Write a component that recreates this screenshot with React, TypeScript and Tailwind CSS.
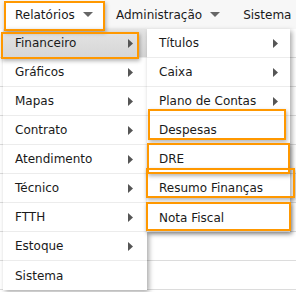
import React from "react";

const font = { fontFamily: '"DejaVu Sans", Verdana, sans-serif' };

function RightArrow() {
  return (
    <svg width="5" height="9" viewBox="0 0 5 9" className="shrink-0">
      <path d="M0 0 L5 4.5 L0 9 Z" fill="#555" />
    </svg>
  );
}

function DownCaret() {
  return (
    <svg width="10" height="5" viewBox="0 0 10 5" className="shrink-0">
      <path d="M0 0 L10 0 L5 5 Z" fill="#666" />
    </svg>
  );
}

const mainItems: { label: string; sub: boolean; active?: boolean }[] = [
  { label: "Financeiro", sub: true, active: true },
  { label: "Gráficos", sub: true },
  { label: "Mapas", sub: true },
  { label: "Contrato", sub: true },
  { label: "Atendimento", sub: true },
  { label: "Técnico", sub: true },
  { label: "FTTH", sub: true },
  { label: "Estoque", sub: true },
  { label: "Sistema", sub: false },
];

const subItems: { label: string; sub: boolean }[] = [
  { label: "Títulos", sub: true },
  { label: "Caixa", sub: true },
  { label: "Plano de Contas", sub: true },
  { label: "Despesas", sub: false },
  { label: "DRE", sub: false },
  { label: "Resumo Finanças", sub: false },
  { label: "Nota Fiscal", sub: false },
];

export default function App() {
  return (
    <div
      className="relative w-[296px] h-[292px] overflow-hidden bg-white text-[12px] text-[#1a1a1a]"
      style={font}
    >
      {/* top bar */}
      <div className="flex h-[29px] items-center bg-[#f7f7f7]">
        <div className="ml-[4px] flex h-full w-[100px] items-center gap-[8px] bg-white pl-[11px]">
          <span>Relatórios</span>
          <DownCaret />
        </div>
        <div className="flex h-full items-center gap-[8px] pl-[12px] pr-[23px]">
          <span>Administração</span>
          <DownCaret />
        </div>
        <div className="flex h-full items-center">
          <span>Sistema</span>
        </div>
      </div>

      {/* underlying page lines */}
      <div className="flex flex-col">
        {mainItems.map((_, i) => (
          <div key={i} className="h-[29px] border-b border-[#dcdcdc]" />
        ))}
      </div>

      {/* main dropdown */}
      <div className="absolute left-[3px] top-[29px] w-[144px] bg-white shadow-[2px_2px_5px_rgba(0,0,0,0.35)]">
        {mainItems.map((it, i) => (
          <div
            key={it.label}
            className={
              "flex h-[29px] items-center justify-between pl-[12px] pr-[14px] " +
              (i < mainItems.length - 1 ? "border-b border-[#ececec] " : "") +
              (it.active ? "bg-gradient-to-b from-[#e4e4e4] to-[#d6d6d6]" : "")
            }
          >
            <span>{it.label}</span>
            {it.sub && <RightArrow />}
          </div>
        ))}
      </div>

      {/* submenu */}
      <div className="absolute left-[147px] top-[29px] w-[143px] bg-white shadow-[2px_2px_5px_rgba(0,0,0,0.35)]">
        {subItems.map((it, i) => (
          <div
            key={it.label}
            className={
              "flex h-[29px] items-center justify-between pl-[12px] pr-[12px] " +
              (i < subItems.length - 1 ? "border-b border-[#ececec]" : "")
            }
          >
            <span>{it.label}</span>
            {it.sub && <RightArrow />}
          </div>
        ))}
      </div>

      {/* annotation boxes */}
      <div className="absolute left-[4px] top-[1px] h-[30px] w-[101px] border-2 border-[#ff9800] shadow-[1px_2px_4px_rgba(0,0,0,0.3)]" />
      <div className="absolute left-[1px] top-[32px] h-[27px] w-[138px] border-2 border-[#ff9800] shadow-[1px_2px_4px_rgba(0,0,0,0.3)]" />
      <div className="absolute left-[148px] top-[109px] h-[31px] w-[138px] border-2 border-[#ff9800] shadow-[1px_2px_4px_rgba(0,0,0,0.3)]" />
      <div className="absolute left-[147px] top-[143px] h-[31px] w-[143px] border-2 border-[#ff9800] shadow-[1px_2px_4px_rgba(0,0,0,0.3)]" />
      <div className="absolute left-[146px] top-[168px] h-[30px] w-[149px] border-2 border-[#ff9800] shadow-[1px_2px_4px_rgba(0,0,0,0.3)]" />
      <div className="absolute left-[146px] top-[202px] h-[29px] w-[145px] border-2 border-[#ff9800] shadow-[1px_2px_4px_rgba(0,0,0,0.3)]" />
    </div>
  );
}
